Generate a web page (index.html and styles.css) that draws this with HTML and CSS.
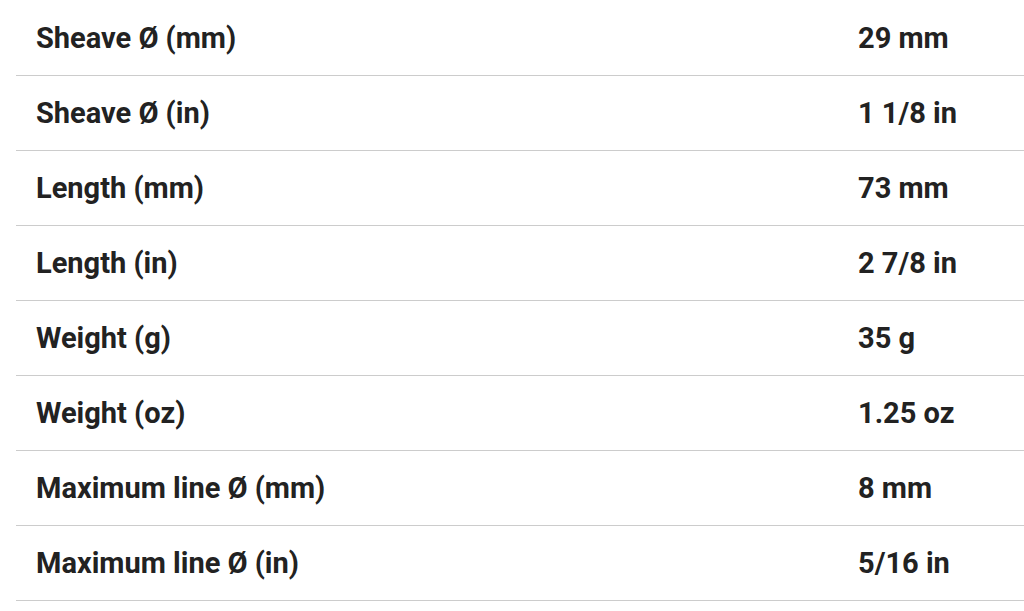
FILE: index.html
```html
<!DOCTYPE html>
<html lang="en">
<head>
<meta charset="utf-8">
<link rel="stylesheet" href="styles.css">
</head>
<body>
<div class="specs">
  <div class="row"><div class="label">Sheave Ø (mm)</div><div class="value">29 mm</div></div>
  <div class="row"><div class="label">Sheave Ø (in)</div><div class="value">1 1/8 in</div></div>
  <div class="row"><div class="label">Length (mm)</div><div class="value">73 mm</div></div>
  <div class="row"><div class="label">Length (in)</div><div class="value">2 7/8 in</div></div>
  <div class="row"><div class="label">Weight (g)</div><div class="value">35 g</div></div>
  <div class="row"><div class="label">Weight (oz)</div><div class="value">1.25 oz</div></div>
  <div class="row"><div class="label">Maximum line Ø (mm)</div><div class="value">8 mm</div></div>
  <div class="row"><div class="label">Maximum line Ø (in)</div><div class="value">5/16 in</div></div>
</div>
</body>
</html>
```
FILE: styles.css
```css
html, body {
  margin: 0;
  padding: 0;
  background: #ffffff;
}
.specs {
  padding: 1px 0 0 16px;
  font-family: Roboto, "Liberation Sans", sans-serif;
  font-weight: 700;
  font-size: 29px;
  color: #222222;
}
.row {
  display: grid;
  grid-template-columns: 842px 1fr;
  height: 74px;
  align-items: center;
  border-bottom: 1px solid #cccccc;
}
.label {
  padding-left: 20px;
}
.value {
  padding-left: 0;
}
```
